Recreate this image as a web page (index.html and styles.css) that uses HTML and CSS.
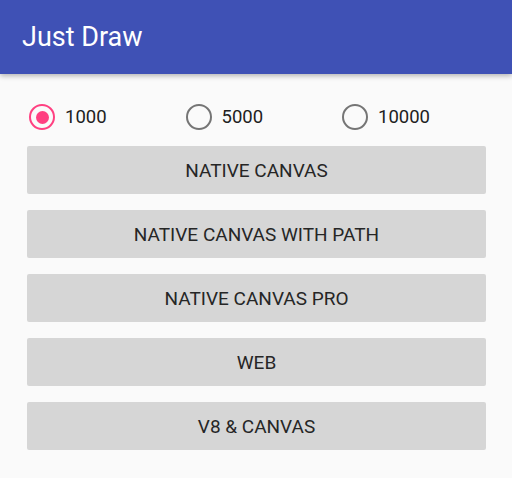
FILE: index.html
```html
<!DOCTYPE html>
<html>
<head>
<meta charset="utf-8">
<link rel="stylesheet" href="styles.css">
</head>
<body>
<header class="appbar"><h1 class="title">Just Draw</h1></header>
<main class="content">
  <div class="radios">
    <label class="radio checked"><span class="ring"><span class="dot"></span></span><span class="rlabel">1000</span></label>
    <label class="radio"><span class="ring"></span><span class="rlabel">5000</span></label>
    <label class="radio"><span class="ring"></span><span class="rlabel">10000</span></label>
  </div>
  <div class="buttons">
    <button class="btn">NATIVE CANVAS</button>
    <button class="btn">NATIVE CANVAS WITH PATH</button>
    <button class="btn">NATIVE CANVAS PRO</button>
    <button class="btn">WEB</button>
    <button class="btn">V8 &amp; CANVAS</button>
  </div>
</main>
</body>
</html>
```
FILE: styles.css
```css
html, body { margin: 0; padding: 0; }
body {
  background: #fafafa;
  font-family: Roboto, "Noto Sans", sans-serif;
  width: 512px;
  height: 478px;
  overflow: hidden;
}
.appbar {
  height: 74px;
  background: #3f51b5;
  box-shadow: 0 2px 5px rgba(0,0,0,0.28);
  display: flex;
  align-items: center;
  padding-left: 22px;
  position: relative;
  z-index: 1;
}
.title {
  margin: 0;
  color: #fff;
  font-size: 27px;
  font-weight: 400;
  margin-top: -1px;
}
.content {
  padding: 0 26px 0 27px;
}
.radios {
  display: grid;
  grid-template-columns: 156.5px 156.5px 1fr;
  height: 42px;
  margin-top: 22px;
  margin-bottom: 8px;
  align-items: center;
  padding-left: 2px;
}
.radio {
  display: flex;
  align-items: center;
  gap: 10px;
}
.ring {
  box-sizing: border-box;
  width: 26px;
  height: 26px;
  border-radius: 50%;
  border: 2.6px solid #757575;
  display: flex;
  align-items: center;
  justify-content: center;
}
.radio.checked .ring { border-color: #ff4081; }
.dot {
  width: 13px;
  height: 13px;
  border-radius: 50%;
  background: #ff4081;
}
.rlabel {
  font-size: 18.5px;
  color: #212121;
}
.buttons {
  display: flex;
  flex-direction: column;
  gap: 16px;
}
.btn {
  height: 48px;
  width: 459px;
  border: none;
  border-radius: 2px;
  background: #d6d6d6;
  font-family: Roboto, "Noto Sans", sans-serif;
  font-size: 19px;
  color: #262626;
  padding: 0;
}
```
